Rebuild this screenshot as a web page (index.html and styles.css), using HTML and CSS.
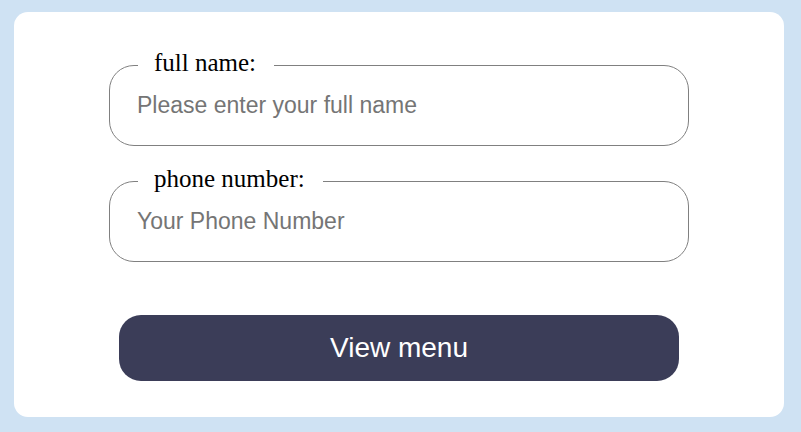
FILE: index.html
```html
<!DOCTYPE html>
<html>
<head>
<meta charset="utf-8">
<link rel="stylesheet" href="styles.css">
</head>
<body>
<form class="card">
  <fieldset class="field">
    <legend class="label">full name:</legend>
    <input class="input" type="text" placeholder="Please enter your full name">
  </fieldset>
  <fieldset class="field">
    <legend class="label">phone number:</legend>
    <input class="input" type="text" placeholder="Your Phone Number">
  </fieldset>
  <button class="btn" type="button">View menu</button>
</form>
</body>
</html>
```
FILE: styles.css
```css
html, body {
  margin: 0;
  height: 100%;
}
body {
  background: #cfe2f3;
  padding: 12px 17px 15px 14px;
  box-sizing: border-box;
}
.card {
  background: #ffffff;
  border-radius: 14px;
  height: 405px;
  box-sizing: border-box;
  padding: 42px 0 0;
  display: flex;
  flex-direction: column;
  align-items: center;
}
.field {
  width: 580px;
  box-sizing: border-box;
  margin: 0 0 24px;
  padding: 0 27px 12px 28px;
  border: 1px solid #808080;
  border-radius: 25px;
}
.label {
  font-family: "Liberation Serif", serif;
  font-size: 25px;
  line-height: 17px;
  padding: 0 18px 6px 16px;
  color: #000;
}
.input {
  display: block;
  width: 100%;
  height: 56px;
  border: none;
  outline: none;
  padding: 0;
  margin: 0 0 0 -1px;
  font-family: "Liberation Sans", Arial, sans-serif;
  font-size: 23px;
  color: #333;
  background: transparent;
}
.input::placeholder {
  color: #757575;
}
.btn {
  margin-top: 29px;
  width: 560px;
  height: 66px;
  border: none;
  border-radius: 22px;
  background: #3b3d58;
  color: #ffffff;
  font-family: "Liberation Sans", Arial, sans-serif;
  font-size: 28px;
}
```
